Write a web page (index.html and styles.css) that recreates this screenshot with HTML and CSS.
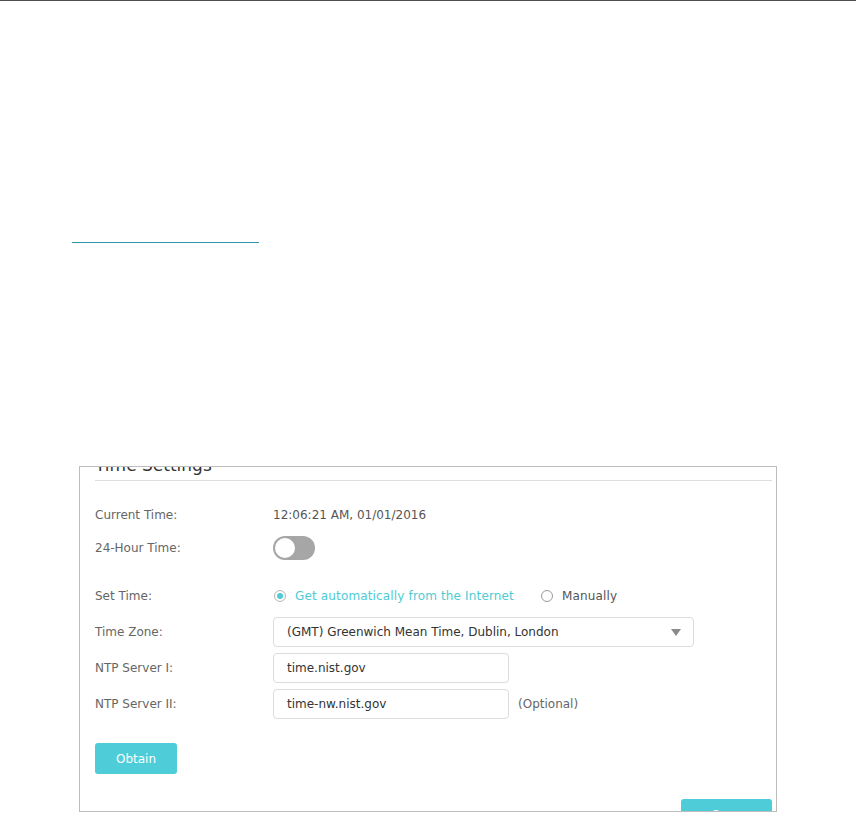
FILE: index.html
```html
<!DOCTYPE html>
<html lang="en">
<head>
  <meta charset="UTF-8" />
  <meta name="viewport" content="width=device-width, initial-scale=1" />
  <title>Time Settings</title>
  <link rel="stylesheet" href="styles.css">
</head>
<body>

  <!-- Page top rule -->
  <div class="top-rule"></div>

  <!-- Link (underline only) -->
  <a href="#" class="doc-link"></a>

  <!-- Screenshot of the settings panel -->
  <div class="panel">
    <h2 class="panel-title">Time Settings</h2>

    <div class="row row-first">
      <span class="label">Current Time:</span>
      <span class="value">12:06:21 AM, 01/01/2016</span>
    </div>

    <div class="row row-tight">
      <span class="label">24-Hour Time:</span>
      <span class="switch"><span class="knob"></span></span>
    </div>

    <div class="row row-spaced">
      <span class="label">Set Time:</span>
      <label class="radio checked"><span class="dot"></span>Get automatically from the Internet</label>
      <label class="radio"><span class="dot"></span>Manually</label>
    </div>

    <div class="row">
      <span class="label">Time Zone:</span>
      <div class="select">
        <span>(GMT) Greenwich Mean Time, Dublin, London</span>
        <span class="arrow"></span>
      </div>
    </div>

    <div class="row">
      <span class="label">NTP Server I:</span>
      <div class="input">time.nist.gov</div>
    </div>

    <div class="row">
      <span class="label">NTP Server II:</span>
      <div class="input">time-nw.nist.gov</div>
      <span class="hint">(Optional)</span>
    </div>

    <button class="button obtain">Obtain</button>

    <div class="actions">
      <button class="button save">Save</button>
    </div>
  </div>

</body>
</html>
```

FILE: styles.css
```css
* {
  box-sizing: border-box;
}

body {
  margin: 0;
  background: #fff;
  font-family: "DejaVu Sans", Verdana, sans-serif;
  font-size: 12px;
  color: #555;
}

.top-rule {
  border-top: 1px solid #4f4f4f;
}

.doc-link {
  display: block;
  width: 187px;
  height: 0;
  margin: 241px 0 0 72px;
  border-bottom: 1px solid #2f96ad;
}

.panel {
  width: 698px;
  height: 346px;
  margin: 223px 0 0 79px;
  padding: 0 4px 0 15px;
  border: 1px solid #bdbdbd;
  overflow: hidden;
}

.panel-title {
  margin: -13px 0 0;
  padding-bottom: 4px;
  font-size: 17px;
  font-weight: normal;
  line-height: 22px;
  color: #333;
  border-bottom: 1px solid #dedede;
}

.row {
  display: flex;
  align-items: center;
  height: 30px;
  margin-top: 6px;
}

.row-first {
  margin-top: 19px;
}

.row-tight {
  margin-top: 3px;
}

.row-spaced {
  margin-top: 18px;
}

.label {
  width: 178px;
  flex-shrink: 0;
  color: #666;
}

.value {
  color: #555;
}

/* toggle switch */
.switch {
  position: relative;
  width: 42px;
  height: 24px;
  border-radius: 12px;
  background: #a6a6a6;
}

.switch .knob {
  position: absolute;
  top: 2px;
  left: 2px;
  width: 20px;
  height: 20px;
  border-radius: 50%;
  background: #fff;
}

/* radios */
.radio {
  display: flex;
  align-items: center;
  color: #555;
  margin-right: 26px;
  letter-spacing: 0.15px;
}

.radio .dot {
  position: relative;
  width: 12px;
  height: 12px;
  margin: 0 9px 0 1px;
  border: 1px solid #999;
  border-radius: 50%;
}

.radio.checked {
  color: #4ecbd6;
}

.radio.checked .dot {
  border-color: #b5b5b5;
}

.radio.checked .dot::after {
  content: "";
  position: absolute;
  top: 2px;
  left: 2px;
  width: 6px;
  height: 6px;
  border-radius: 50%;
  background: #4ecbd6;
}

/* select + inputs */
.select,
.input {
  display: flex;
  align-items: center;
  height: 30px;
  padding: 0 13px;
  border: 1px solid #dcdcdc;
  border-radius: 4px;
  color: #333;
}

.select {
  width: 421px;
  justify-content: space-between;
}

.select .arrow {
  width: 0;
  height: 0;
  margin-right: -1px;
  border-left: 5px solid transparent;
  border-right: 5px solid transparent;
  border-top: 7px solid #8a8a8a;
}

.input {
  width: 236px;
}

.hint {
  margin-left: 9px;
  color: #666;
}

/* buttons */
.button {
  display: block;
  height: 31px;
  padding: 0;
  border: none;
  border-radius: 3px;
  background: #4ecdd8;
  color: #fff;
  font-family: inherit;
  font-size: 12px;
  cursor: pointer;
}

.obtain {
  width: 82px;
  margin-top: 24px;
}

.actions {
  display: flex;
  justify-content: flex-end;
  margin-top: 25px;
}

.save {
  width: 91px;
}
```
